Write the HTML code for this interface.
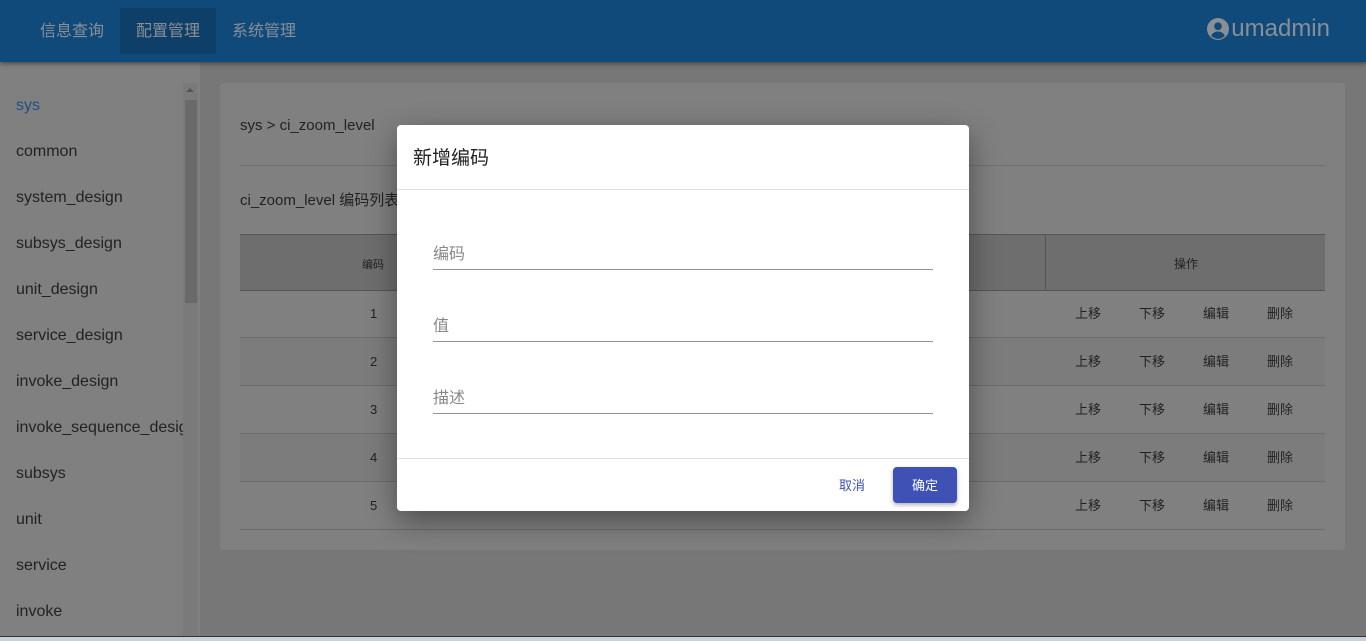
<!DOCTYPE html>
<html><head><meta charset="utf-8"><style>
*{margin:0;padding:0;box-sizing:border-box}
body{width:1366px;height:641px;overflow:hidden;background:#777;font-family:"Liberation Sans","Noto Sans CJK SC",sans-serif;position:relative}
.hdr{position:absolute;left:0;top:0;width:1366px;height:62px;background:#0f4a7a;box-shadow:0 2px 4px rgba(0,0,0,.4);z-index:2}
.nav{position:absolute;top:8px;height:46px;line-height:46px;font-size:16px;color:#8a8f96;padding:0 16px}
.user{position:absolute;right:36px;top:15px;font-size:24px;color:#8a8f96;display:flex;align-items:center;gap:2px}
.side{position:absolute;left:0;top:62px;width:200px;height:574px;background:#808080}
.side .it{position:absolute;left:16px;font-size:16px;color:#222;white-space:nowrap;width:167px;overflow:hidden}
.sb{position:absolute;left:183px;top:83px;width:15px;height:553px;background:#7a7a7a}
.thumb{position:absolute;left:185px;top:100px;width:12px;height:203px;background:#6a6a6a}
.card{position:absolute;left:220px;top:83px;width:1125px;height:467px;background:#808080;border-radius:3px}
.t{position:absolute;font-size:15px;color:#222}
.row{position:absolute;left:240px;width:1085px;height:48px;border-bottom:1px solid #6c6c6c}
.cell{position:absolute;font-size:13px;color:#222;top:15px;line-height:18px}
.dlg{position:absolute;left:397px;top:125px;width:572px;height:386px;background:#fff;border-radius:4px;box-shadow:0 10px 30px rgba(0,0,0,.4);z-index:5}
.fld{position:absolute;left:36px;width:500px;border-bottom:1px solid #949494;height:30px;font-size:16px;color:#888}
.task{position:absolute;left:0;top:636px;width:1366px;height:5px;background:#c8d0d8;border-top:1px solid #333}
</style></head><body>
<div class="hdr">
<div class="nav" style="left:24px;top:8px;line-height:46px;padding-top:1px">信息查询</div>
<div class="nav" style="left:120px;background:#0e3f68;padding-top:1px">配置管理</div>
<div class="nav" style="left:216px;padding-top:1px">系统管理</div>
<div class="user"><svg width="22" height="22" viewBox="0 0 20 20"><circle cx="10" cy="10" r="10" fill="#8a8f96"/><circle cx="10" cy="7.5" r="3.5" fill="#0f4a7a"/><path d="M3.8 16c1.5-2.6 3.7-3.7 6.2-3.7s4.7 1.1 6.2 3.7A8 8 0 0 1 3.8 16z" fill="#0f4a7a"/></svg>umadmin</div>
</div>
<div class="side">
<div class="it" style="top:35px;color:#1d4f80">sys</div>
<div class="it" style="top:81px">common</div>
<div class="it" style="top:127px">system_design</div>
<div class="it" style="top:173px">subsys_design</div>
<div class="it" style="top:219px">unit_design</div>
<div class="it" style="top:265px">service_design</div>
<div class="it" style="top:311px">invoke_design</div>
<div class="it" style="top:357px">invoke_sequence_design</div>
<div class="it" style="top:403px">subsys</div>
<div class="it" style="top:449px">unit</div>
<div class="it" style="top:495px">service</div>
<div class="it" style="top:541px">invoke</div>
</div>
<div class="sb"></div><div class="thumb"></div>
<div style="position:absolute;left:186px;top:88px;width:0;height:0;border:4px solid transparent;border-bottom-color:#555;border-top:0"></div>
<div class="card"></div>
<div class="t" style="left:240px;top:117px">sys &gt; ci_zoom_level</div>
<div style="position:absolute;left:240px;top:165px;width:1085px;height:1px;background:#707070"></div>
<div class="t" style="left:240px;top:189px">ci_zoom_level 编码列表</div>
<div style="position:absolute;left:240px;top:234px;width:1085px;height:57px;background:#6e6e6e;border-top:1px solid #555;border-bottom:1px solid #555"></div>
<div style="position:absolute;left:1045px;top:234px;width:1px;height:57px;background:#555"></div>
<div class="t" style="left:362px;top:256px;font-size:11px">编码</div>
<div class="t" style="left:1174px;top:255px;font-size:12px">操作</div>
<div class="row" style="top:290px"><span class="cell" style="left:130px">1</span><span class="cell" style="left:835px">上移</span><span class="cell" style="left:899px">下移</span><span class="cell" style="left:963px">编辑</span><span class="cell" style="left:1027px">删除</span></div>
<div class="row" style="top:338px;background:#7c7c7c"><span class="cell" style="left:130px">2</span><span class="cell" style="left:835px">上移</span><span class="cell" style="left:899px">下移</span><span class="cell" style="left:963px">编辑</span><span class="cell" style="left:1027px">删除</span></div>
<div class="row" style="top:386px"><span class="cell" style="left:130px">3</span><span class="cell" style="left:835px">上移</span><span class="cell" style="left:899px">下移</span><span class="cell" style="left:963px">编辑</span><span class="cell" style="left:1027px">删除</span></div>
<div class="row" style="top:434px;background:#7c7c7c"><span class="cell" style="left:130px">4</span><span class="cell" style="left:835px">上移</span><span class="cell" style="left:899px">下移</span><span class="cell" style="left:963px">编辑</span><span class="cell" style="left:1027px">删除</span></div>
<div class="row" style="top:482px"><span class="cell" style="left:130px">5</span><span class="cell" style="left:835px">上移</span><span class="cell" style="left:899px">下移</span><span class="cell" style="left:963px">编辑</span><span class="cell" style="left:1027px">删除</span></div>
<div class="dlg">
<div style="position:absolute;left:16px;top:18px;font-size:19px;color:#222">新增编码</div>
<div style="position:absolute;left:0;top:64px;width:572px;height:1px;background:#e0e0e0"></div>
<div class="fld" style="top:115px">编码</div>
<div class="fld" style="top:187px">值</div>
<div class="fld" style="top:259px">描述</div>
<div style="position:absolute;left:0;top:333px;width:572px;height:1px;background:#e0e0e0"></div>
<div style="position:absolute;left:442px;top:350px;font-size:13px;color:#3f51b5">取消</div>
<div style="position:absolute;left:496px;top:342px;width:64px;height:36px;background:#3f51b5;border-radius:4px;color:#fff;font-size:13px;line-height:38px;text-align:center;box-shadow:0 2px 4px rgba(0,0,0,.3)">确定</div>
</div>
<div class="task"></div>
</body></html>
